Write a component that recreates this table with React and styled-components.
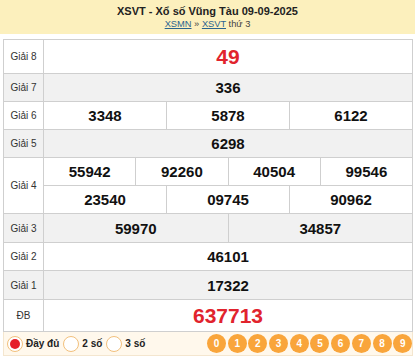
import React from "react";
import styled, { createGlobalStyle } from "styled-components";

const GlobalStyle = createGlobalStyle`
  body {
    margin: 0;
    background: #fff;
    font-family: "Liberation Sans", Arial, sans-serif;
  }
`;

const Header = styled.div`
  height: 34px;
  box-sizing: border-box;
  padding-top: 5px;
  background: #fcf0bd;
  text-align: center;
  color: #222;
`;

const Title = styled.div`
  font-size: 11px;
  font-weight: bold;
  line-height: 13px;
`;

const Crumbs = styled.div`
  font-size: 9.3px;
  line-height: 12px;
  color: #444;

  a {
    color: #2b6490;
    text-decoration: underline;
  }
`;

const Wrap = styled.div`
  margin: 5px 2px 0 3px;
`;

const Table = styled.div`
  display: grid;
  grid-template-columns: 39px 1fr;
  gap: 1px;
  background: #cfcfcf;
  border: 1px solid #cfcfcf;
`;

const Label = styled.div`
  display: flex;
  align-items: center;
  justify-content: center;
  background: ${({ $alt }) => ($alt ? "#f1f1f1" : "#fff")};
  font-size: 10px;
  color: #333;
`;

const Values = styled.div`
  display: flex;
  flex-direction: column;
  gap: 1px;
`;

const Line = styled.div`
  display: grid;
  grid-template-columns: repeat(${({ $cols }) => $cols}, 1fr);
  gap: 1px;
`;

const Num = styled.div`
  height: ${({ $h }) => $h}px;
  display: flex;
  align-items: center;
  justify-content: center;
  background: ${({ $alt }) => ($alt ? "#f1f1f1" : "#fff")};
  font-weight: bold;
  font-size: ${({ $big }) => ($big ? "21px" : "15px")};
  color: ${({ $red }) => ($red ? "#e1232d" : "#111")};
`;

const Footer = styled.div`
  height: 23px;
  display: flex;
  align-items: center;
  justify-content: space-between;
  background: #fff8ec;
  border: 1px solid #f4e6cf;
  border-top: none;
  padding-left: 3px;
`;

const Options = styled.div`
  display: flex;
  align-items: center;
  gap: 4px;
`;

const Option = styled.label`
  display: flex;
  align-items: center;
  gap: 3px;
  font-size: 10px;
  font-weight: bold;
  color: #222;
`;

const Radio = styled.span`
  width: 16px;
  height: 16px;
  box-sizing: border-box;
  border-radius: 50%;
  border: 1px solid #f2c07c;
  background: #fff;
  display: flex;
  align-items: center;
  justify-content: center;
  flex-shrink: 0;

  &::after {
    content: "";
    width: 10px;
    height: 10px;
    border-radius: 50%;
    background: ${({ $on }) => ($on ? "#e51f2b" : "transparent")};
  }
`;

const Balls = styled.div`
  display: grid;
  grid-template-columns: repeat(10, 19px);
  column-gap: 1.7px;
  width: 206px;
  margin-right: -1px;
`;

const Ball = styled.div`
  width: 19px;
  height: 19px;
  border-radius: 50%;
  background: #f9a53b;
  color: #fff;
  font-size: 10px;
  font-weight: bold;
  display: flex;
  align-items: center;
  justify-content: center;
`;

const prizes = [
  { name: "Giải 8", lines: [["49"]], h: 33, big: true, red: true },
  { name: "Giải 7", lines: [["336"]], h: 27 },
  { name: "Giải 6", lines: [["3348", "5878", "6122"]], h: 27 },
  { name: "Giải 5", lines: [["6298"]], h: 27 },
  {
    name: "Giải 4",
    lines: [
      ["55942", "92260", "40504", "99546"],
      ["23540", "09745", "90962"],
    ],
    h: 27,
  },
  { name: "Giải 3", lines: [["59970", "34857"]], h: 28 },
  { name: "Giải 2", lines: [["46101"]], h: 27 },
  { name: "Giải 1", lines: [["17322"]], h: 28 },
  { name: "ĐB", lines: [["637713"]], h: 31, big: true, red: true },
];

export default function App() {
  return (
    <>
      <GlobalStyle />
      <Header>
        <Title>XSVT - Xổ số Vũng Tàu 09-09-2025</Title>
        <Crumbs>
          <a>XSMN</a> » <a>XSVT</a> thứ 3
        </Crumbs>
      </Header>
      <Wrap>
        <Table>
          {prizes.map((p, i) => {
            const alt = i % 2 === 1;
            return (
              <React.Fragment key={p.name}>
                <Label $alt={alt}>{p.name}</Label>
                <Values>
                  {p.lines.map((line, j) => (
                    <Line key={j} $cols={line.length}>
                      {line.map((n) => (
                        <Num key={n} $h={p.h} $alt={alt} $big={p.big} $red={p.red}>
                          {n}
                        </Num>
                      ))}
                    </Line>
                  ))}
                </Values>
              </React.Fragment>
            );
          })}
        </Table>
        <Footer>
          <Options>
            <Option>
              <Radio $on />
              Đầy đủ
            </Option>
            <Option>
              <Radio />
              2 số
            </Option>
            <Option>
              <Radio />
              3 số
            </Option>
          </Options>
          <Balls>
            {[0, 1, 2, 3, 4, 5, 6, 7, 8, 9].map((d) => (
              <Ball key={d}>{d}</Ball>
            ))}
          </Balls>
        </Footer>
      </Wrap>
    </>
  );
}
